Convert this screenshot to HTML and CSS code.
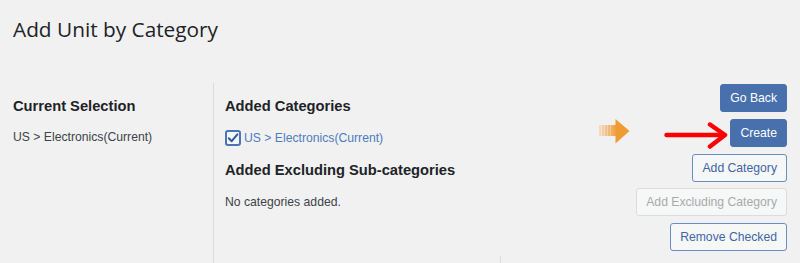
FILE: index.html
```html
<!DOCTYPE html>
<html>
<head>
<meta charset="utf-8">
<link rel="stylesheet" href="styles.css">
</head>
<body>
<div class="page">
  <h1 class="title">Add Unit by Category</h1>
  <div class="main">
    <div class="col-left">
      <h2 class="heading">Current Selection</h2>
      <p class="text">US &gt; Electronics(Current)</p>
    </div>
    <div class="col-mid">
      <h2 class="heading">Added Categories</h2>
      <label class="check-row">
        <span class="checkbox">
          <svg width="12" height="12" viewBox="0 0 12 12"><path d="M1.8 6.2 L4.7 9.2 L10.4 2.4" fill="none" stroke="#2f5a98" stroke-width="2" stroke-linecap="round" stroke-linejoin="round"/></svg>
        </span>
        <span class="link">US &gt; Electronics(Current)</span>
      </label>
      <h2 class="heading heading-sub">Added Excluding Sub-categories</h2>
      <p class="text text-none">No categories added.</p>
      <div class="next-section"></div>
    </div>
    <div class="col-right">
      <button class="btn btn-primary">Go Back</button>
      <button class="btn btn-primary">Create</button>
      <button class="btn btn-secondary">Add Category</button>
      <button class="btn btn-disabled">Add Excluding Category</button>
      <button class="btn btn-secondary">Remove Checked</button>
      <svg class="arrow-orange" width="31" height="25" viewBox="0 0 31 25">
        <defs>
          <linearGradient id="tail" x1="0" x2="1" y1="0" y2="0">
            <stop offset="0" stop-color="#f0a040" stop-opacity="0.25"/>
            <stop offset="1" stop-color="#f0a040" stop-opacity="1"/>
          </linearGradient>
        </defs>
        <rect x="0" y="6" width="17" height="11" fill="url(#tail)"/>
        <rect x="2" y="6" width="1" height="11" fill="#f1f1f1" opacity="0.6"/>
        <rect x="5" y="6" width="1" height="11" fill="#f1f1f1" opacity="0.5"/>
        <rect x="8" y="6" width="1" height="11" fill="#f1f1f1" opacity="0.4"/>
        <rect x="11" y="6" width="1" height="11" fill="#f1f1f1" opacity="0.3"/>
        <path d="M16.5 0 L30.5 12 L16.5 24.5 Z" fill="#ee9a35"/>
      </svg>
      <svg class="arrow-red" width="64" height="28" viewBox="0 0 64 28">
        <path d="M2.5 13 H60" stroke="#ff0000" stroke-width="4.5" stroke-linecap="round" fill="none"/>
        <path d="M46 2.5 L61 13 L46 24.5" stroke="#ff0000" stroke-width="4.5" stroke-linecap="round" stroke-linejoin="round" fill="none"/>
      </svg>
    </div>
  </div>
</div>
</body>
</html>
```
FILE: styles.css
```css
html, body {
  margin: 0;
  padding: 0;
  background: #f1f1f1;
  overflow: hidden;
}
.page {
  width: 800px;
  height: 263px;
  overflow: hidden;
  font-family: "Liberation Sans", Arial, sans-serif;
  color: #1d2327;
}
.title {
  margin: 0;
  padding: 14px 0 0 13px;
  font-family: "Open Sans", "Noto Sans", sans-serif;
  font-weight: 400;
  font-size: 20.8px;
  line-height: 30px;
  color: #1d2327;
}
.main {
  margin-top: 39px;
  display: flex;
  position: relative;
}
.col-left {
  width: 200px;
  padding: 14px 0 0 13px;
  border-right: 1px solid #dcdcdc;
  min-height: 166px;
}
.col-mid {
  flex: 1;
  padding: 14px 0 0 11px;
}
.heading {
  margin: 0;
  font-size: 14.7px;
  line-height: 18px;
  font-weight: 700;
  color: #1d2327;
}
.text {
  margin: 13.7px 0 0;
  font-size: 12.2px;
  line-height: 16px;
  color: #3c434a;
}
.check-row {
  display: flex;
  align-items: center;
  gap: 3px;
  margin-top: 14.3px;
  height: 18px;
}
.checkbox {
  width: 12px;
  height: 12px;
  border: 2px solid #4a74b4;
  border-radius: 3px;
  display: flex;
  align-items: center;
  justify-content: center;
  background: #f4f6fa;
}
.checkbox svg {
  display: block;
}
.link {
  font-size: 12.2px;
  line-height: 16px;
  color: #4f7cc0;
}
.heading-sub {
  margin-top: 13.7px;
}
.text-none {
  margin-top: 15px;
}
.next-section {
  margin: 46px 0 0 275px;
  height: 7px;
  border-left: 1px solid #dcdcdc;
}
.col-right {
  display: flex;
  flex-direction: column;
  align-items: flex-end;
  gap: 6.75px;
  padding: 1px 13px 0 0;
  position: relative;
}
.btn {
  height: 28px;
  padding: 0 9px;
  font-family: "Liberation Sans", Arial, sans-serif;
  font-size: 12.2px;
  line-height: 26px;
  border-radius: 3px;
  border: 1px solid;
  white-space: nowrap;
}
.btn-primary {
  background: #4770ad;
  border-color: #4770ad;
  color: #ffffff;
}
.btn-secondary {
  background: #f6f7f7;
  border-color: #6a8dc6;
  color: #3f66a6;
}
.btn-disabled {
  background: #f6f7f7;
  border-color: #dcdcde;
  color: #a7aaad;
}
.arrow-orange {
  position: absolute;
  right: 170px;
  top: 36px;
}
.arrow-red {
  position: absolute;
  right: 72px;
  top: 39px;
}
```
